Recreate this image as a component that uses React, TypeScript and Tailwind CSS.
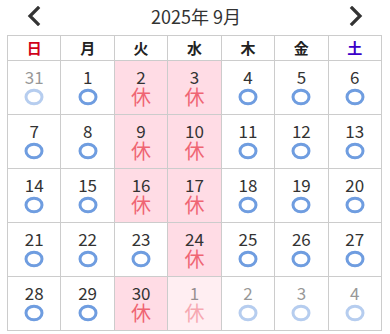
import React from "react";

type Day = { n: number; other?: boolean; off?: boolean };

const WEEK = ["日", "月", "火", "水", "木", "金", "土"];

function buildDays(): Day[] {
  const days: Day[] = [{ n: 31, other: true }];
  for (let i = 1; i <= 30; i++) days.push({ n: i });
  days.push({ n: 1, other: true }, { n: 2, other: true }, { n: 3, other: true }, { n: 4, other: true });
  // 火・水 は休み（23日は営業）
  return days.map((d, i) => ({
    ...d,
    off: (i % 7 === 2 || i % 7 === 3) && !(d.n === 23 && !d.other),
  }));
}

function Circle() {
  return (
    <svg width="20" height="18" viewBox="0 0 20 18">
      <ellipse cx="10" cy="9" rx="8" ry="6.8" fill="none" stroke="#6f9de0" strokeWidth="3" />
    </svg>
  );
}

function Chevron({ left }: { left?: boolean }) {
  return (
    <svg width="14" height="20" viewBox="0 0 14 20">
      <path
        d={left ? "M11 2 L3 10 L11 18" : "M3 2 L11 10 L3 18"}
        fill="none"
        stroke="#333"
        strokeWidth="3.2"
        strokeLinecap="square"
      />
    </svg>
  );
}

export default function App() {
  const days = buildDays();

  return (
    <div
      className="w-[390px] h-[334px] bg-white text-[#333]"
      style={{ fontFamily: '"Noto Sans CJK JP", "Noto Sans", sans-serif' }}
    >
      <div className="h-[35px] flex items-center justify-between px-[27px] pb-[4px]">
        <Chevron left />
        <div className="text-[18px] leading-none text-[#333] pl-[2px]">2025年 9月</div>
        <Chevron />
      </div>

      <div className="ml-[7px] w-[375px] grid grid-cols-7 border-l border-t border-[#cccccc]">
        {WEEK.map((w, i) => (
          <div
            key={w}
            className={`h-[25px] flex items-center justify-center border-r border-b border-[#cccccc] text-[15px] font-bold ${
              i === 0 ? "text-[#d0021b]" : i === 6 ? "text-[#3b00c8]" : "text-[#222]"
            }`}
          >
            {w}
          </div>
        ))}

        {days.map((d, i) => (
          <div
            key={i}
            className={`h-[54px] border-r border-b border-[#cccccc] ${
              d.off ? (d.other ? "bg-[#ffeef2]" : "bg-[#ffdce5]") : "bg-white"
            }`}
          >
            <div className={`flex flex-col items-center pt-[6px] ${d.other ? "opacity-50" : ""}`}>
              <div className="text-[17px] leading-[20px]">{d.n}</div>
              <div className="h-[20px] flex items-center justify-center">
                {d.off ? (
                  <span className="text-[20px] leading-[20px] text-[#ef6573]">休</span>
                ) : (
                  <Circle />
                )}
              </div>
            </div>
          </div>
        ))}
      </div>
    </div>
  );
}
